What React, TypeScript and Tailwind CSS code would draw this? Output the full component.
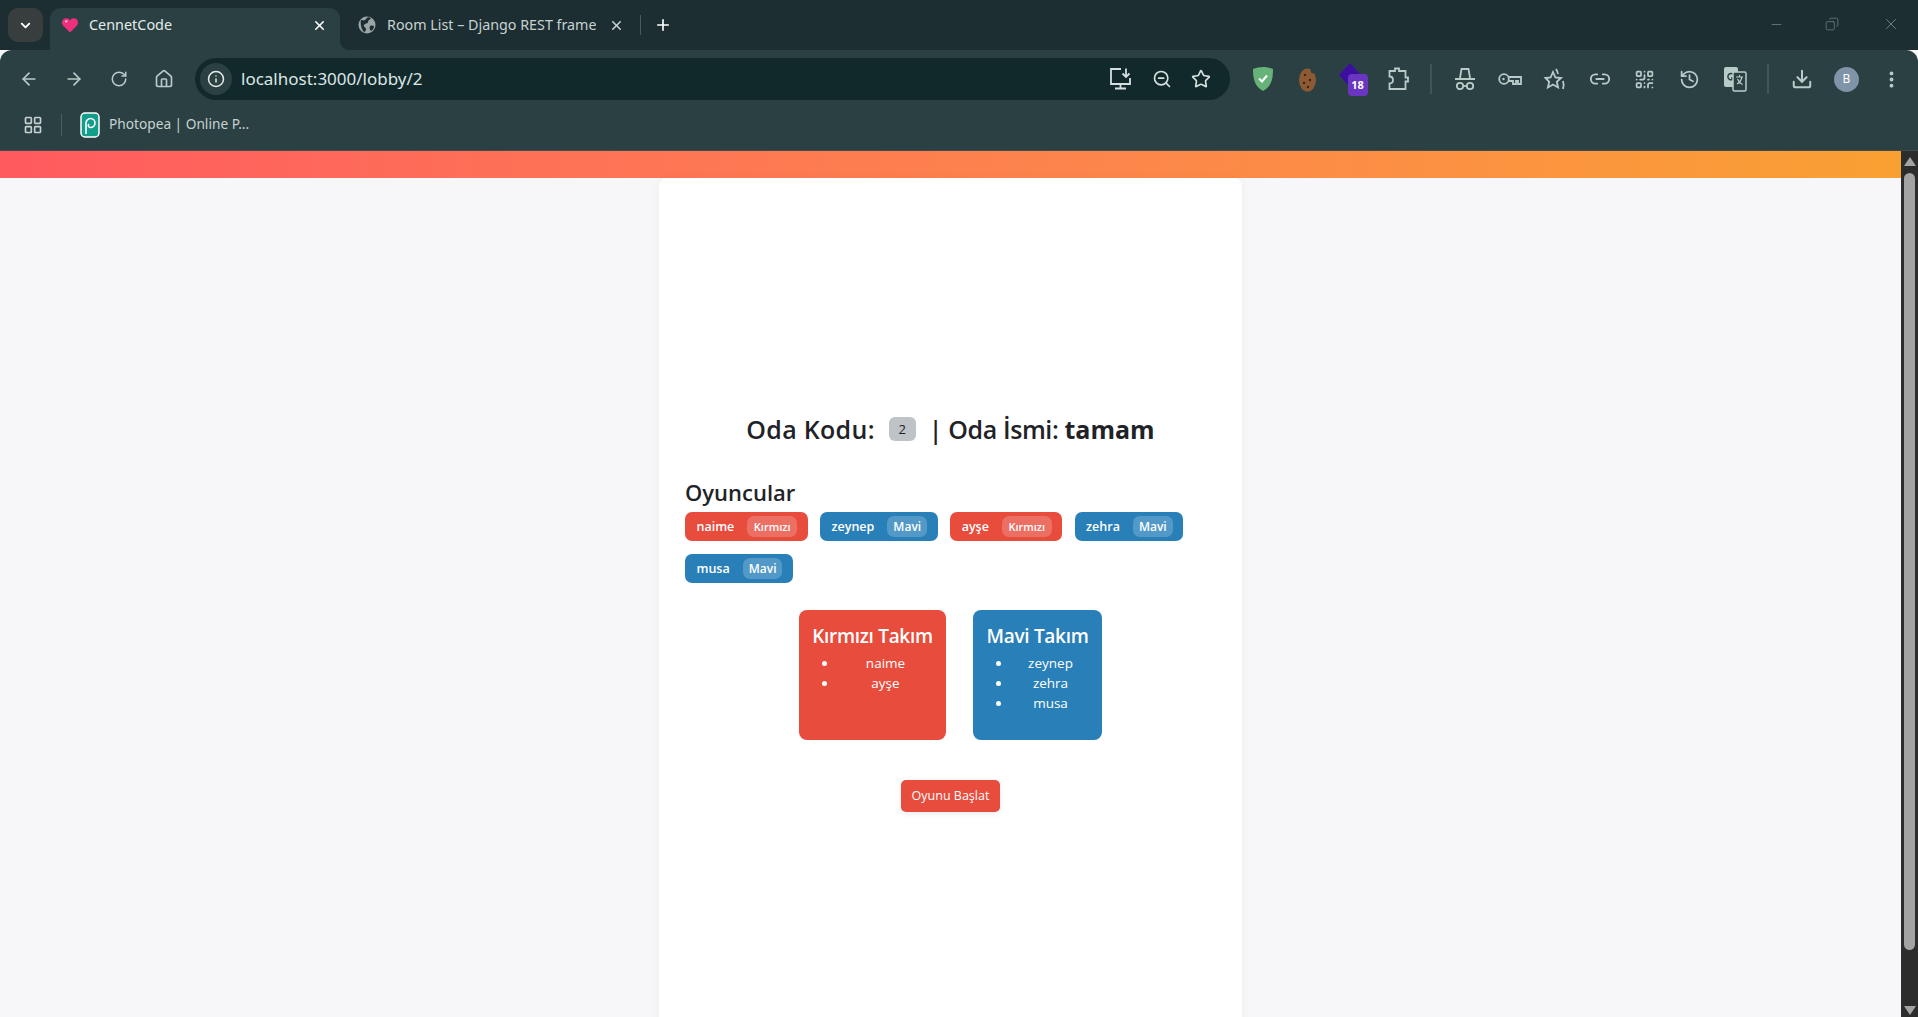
import {
  ArrowLeft,
  ArrowRight,
  ChevronDown,
  Copy,
  Download,
  History,
  House,
  Info,
  LayoutGrid,
  Link2,
  Minus,
  MoreVertical,
  Plus,
  QrCode,
  RotateCw,
  Star,
  X,
  ZoomOut,
} from 'lucide-react';

const uiFont = "font-['Open_Sans','Noto_Sans',sans-serif]";

type Player = { name: string; team: 'red' | 'blue' };

const players: Player[] = [
  { name: 'naime', team: 'red' },
  { name: 'zeynep', team: 'blue' },
  { name: 'ayşe', team: 'red' },
  { name: 'zehra', team: 'blue' },
  { name: 'musa', team: 'blue' },
];

function Heart() {
  return (
    <svg width="18" height="18" viewBox="0 0 18 18">
      <path d="M9 16.500 2 9.500C0 7 1 2.500 5 2.200c1.800-.1 3.200.8 4 2 .8-1.200 2.200-2.100 4-2 4 .3 5 4.800 3 7.300z" fill="#ef2f7c" />
      <path d="M4 5.500c.5-1 1.300-1.400 2.300-1.300v2H4z" fill="#ffd3e4" />
    </svg>
  );
}

function GlobeFilled() {
  return (
    <svg width="18" height="18" viewBox="0 0 18 18" className="shrink-0">
      <circle cx="9" cy="9" r="8.500" fill="#9aa6a6" />
      <path d="M3 4c2 0 3 1 4 0s2-2 3-3l3 1c-1 2-3 2-3 4s-3 1-4 3 2 2 2 4-1 3-2 3C4 14 2 9 3 4zM12 10c2-1 3 0 4 0 0 2-1 4-3 5-1-1-2-3-1-5z" fill="#1d2e33" />
    </svg>
  );
}

function Shield() {
  return (
    <svg width="22" height="26" viewBox="0 0 22 26">
      <path d="M11 1c3.500 0 7 .8 10 2 0 9-1 17-10 22C2 20 1 12 1 3c3-1.200 6.500-2 10-2z" fill="#67b279" />
      <path d="m7 12.500 3 3 5-6" fill="none" stroke="#fff" strokeWidth="2" />
    </svg>
  );
}

function CookieIcon() {
  return (
    <svg width="20" height="26" viewBox="0 0 20 26">
      <ellipse cx="9.500" cy="14" rx="8.500" ry="11.500" fill="#8d5a34" />
      <circle cx="16" cy="4" r="3.500" fill="#2a4043" />
      <circle cx="7" cy="9" r="1.200" fill="#3d2412" />
      <circle cx="12" cy="14" r="1.200" fill="#3d2412" />
      <circle cx="6" cy="17" r="1.200" fill="#3d2412" />
      <circle cx="10" cy="21" r="1.200" fill="#3d2412" />
    </svg>
  );
}

function GemBadge() {
  return (
    <div className="relative h-[34px] w-[30px]">
      <svg className="absolute left-0 top-0" width="24" height="30" viewBox="0 0 24 30">
        <path d="M12 1 23 13 12 25 1 13z" fill="#3d0fa0" />
      </svg>
      <span className="absolute bottom-0 right-0 flex h-[22px] w-[20px] items-center justify-center rounded-[4px] bg-[#6a35c0] text-[11px] font-bold text-white">
        18
      </span>
    </div>
  );
}

function ExtensionIcon() {
  return (
    <svg width="22" height="26" viewBox="0 0 22 26" fill="none" stroke="#b9cbc9" strokeWidth="1.800">
      <path d="M8 5V2.500h4V5h6.500v6.500H21v4h-2.500V23H2.500v-5.500c2.500 0 3.500-1.500 3.500-3.500S5 10.500 2.500 10.500V5z" />
    </svg>
  );
}

function Spy() {
  return (
    <svg width="22" height="24" viewBox="0 0 22 24" fill="none" stroke="#b9cbc9" strokeWidth="1.800">
      <path d="M6 11 7.500 2h7L16 11M1 12h20" />
      <circle cx="6" cy="19" r="3.200" />
      <circle cx="16" cy="19" r="3.200" />
      <path d="M9 19h4" />
    </svg>
  );
}

function KeyIcon() {
  return (
    <svg width="24" height="16" viewBox="0 0 24 16" fill="none" stroke="#b9cbc9" strokeWidth="1.800">
      <circle cx="6" cy="8" r="4.800" />
      <circle cx="5.500" cy="8" r="1.200" fill="#b9cbc9" stroke="none" />
      <path d="M10.500 6H23v7h-3v-3h-2v3h-3v-3h-4.500" />
    </svg>
  );
}

function SparkStar() {
  return (
    <svg width="24" height="24" viewBox="0 0 24 24" fill="none" stroke="#b9cbc9" strokeWidth="1.800">
      <path d="m10 5 2.400 5.500 5.600.5-4.200 3.800 1.300 5.700-5.100-3-5.100 3 1.300-5.700L2.500 11l5.100-.5z" />
      <path d="M13 2c1 1.500 1.500 3 2 5M20 14c1 3 1 5 0 8" />
    </svg>
  );
}

function TranslateIcon() {
  return (
    <svg width="24" height="26" viewBox="0 0 24 26">
      <rect x="1" y="1" width="14" height="20" rx="2" fill="#b9cbc9" />
      <path d="M10.500 8.500A3.200 3.200 0 1 0 11 12H8" fill="none" stroke="#2a4043" strokeWidth="1.500" />
      <rect x="10" y="6" width="13" height="19" rx="1.500" fill="#2a4043" stroke="#b9cbc9" strokeWidth="1.500" />
      <path d="M13 11h7M16.500 9v2M19 11c-1 4-3 6-5 7M14.500 13c1 2.500 3 4.500 5 5.500" fill="none" stroke="#b9cbc9" strokeWidth="1.200" />
    </svg>
  );
}

function InstallIcon() {
  return (
    <svg width="24" height="24" viewBox="0 0 24 24" fill="none" stroke="#d5dfde" strokeWidth="1.800">
      <path d="M13 2H3v15h19v-6M12.500 17v4M7 21.500h11" />
      <path d="M18 1.500V10M14.500 6.500 18 10l3.500-3.500" />
    </svg>
  );
}

function Photopea() {
  return (
    <svg width="20" height="26" viewBox="0 0 20 26">
      <rect x="1" y="1" width="18" height="24" rx="4" fill="#129e8a" stroke="#fff" strokeWidth="1.500" />
      <path d="M6 22V11a4.500 4.500 0 1 1 4.500 4.500A2 2 0 0 1 9 12" fill="none" stroke="#fff" strokeWidth="1.600" />
    </svg>
  );
}

function Slot({ children }: { children: React.ReactNode }) {
  return <div className="flex h-[45px] w-[45px] shrink-0 items-center justify-center text-[#b9cbc9]">{children}</div>;
}

function BrowserChrome() {
  return (
    <header className="shrink-0 font-['Noto_Sans',sans-serif]">
      {/* tab strip */}
      <div className="flex h-[50px] items-end bg-[#1d2e33] pl-2">
        <div className="mb-2 flex h-[34px] w-[35px] items-center justify-center rounded-[10px] bg-[#383d3e] text-white">
          <ChevronDown size={15} strokeWidth={3} />
        </div>
        <div className="relative ml-[7px] flex h-[42px] w-[290px] items-center rounded-t-[11px] bg-[#2a4043] pb-[8px] pl-[11px] text-white">
          <span className="absolute -right-[10px] bottom-0 h-[10px] w-[10px] bg-[radial-gradient(circle_at_100%_0%,transparent_10px,#2a4043_10.500px)]" />
          <Heart />
          <span className="ml-[10px] flex-1 text-[14.400px] text-[#e4ecea]">CennetCode</span>
          <X size={15} strokeWidth={2.500} className="mr-[13px]" />
        </div>
        <div className="flex h-[42px] items-center pb-[8px] text-[#c7d2d0]">
          <span className="ml-[18px]"><GlobeFilled /></span>
          <span className="ml-[11px] w-[209px] shrink-0 overflow-hidden whitespace-nowrap text-[14.300px]">
            Room List – Django REST frame
          </span>
          <X size={15} strokeWidth={2.500} className="ml-[13px] shrink-0" />
          <span className="ml-[16px] h-[20px] w-px shrink-0 bg-[#4b5a5c]" />
          <Plus size={18} strokeWidth={2.200} className="ml-[13px] shrink-0 text-white" />
        </div>
        <div className="ml-auto flex h-[50px] items-center pb-[2px] text-[#8c9a9a]">
          <Minus size={15} strokeWidth={1} className="mr-[41px]" />
          <Copy size={14} strokeWidth={1} className="mr-[43px] -scale-x-100" />
          <X size={18} strokeWidth={1} className="mr-[18px]" />
        </div>
      </div>

      {/* toolbar */}
      <div className="flex h-[58px] items-center rounded-t-[12px] bg-[#2a4043] pl-[6px]">
        <Slot><ArrowLeft size={20} /></Slot>
        <Slot><ArrowRight size={20} /></Slot>
        <Slot><RotateCw size={18} /></Slot>
        <Slot><House size={20} /></Slot>
        <div className="ml-[9px] flex h-[42px] w-[1035px] shrink-0 items-center rounded-full bg-[#12292b] pl-[5px] pr-[7px]">
          <div className="flex h-[32px] w-[32px] items-center justify-center rounded-full bg-[#2a4043] text-[#e4ecea]">
            <Info size={18} />
          </div>
          <span className="ml-[9px] flex-1 text-[17px] text-[#dce6e5]">localhost:3000/lobby/2</span>
          <div className="flex w-[125px] items-center justify-between text-[#d5dfde]">
            <span className="ml-[10px]"><InstallIcon /></span>
            <ZoomOut size={20} className="ml-[1px]" />
            <Star size={20} className="mr-[12px]" />
          </div>
        </div>
        <div className="ml-[10px] flex items-center">
          <Slot><Shield /></Slot>
          <Slot><CookieIcon /></Slot>
          <Slot><GemBadge /></Slot>
          <Slot><ExtensionIcon /></Slot>
          <div className="flex h-[45px] w-[22px] items-center justify-center">
            <span className="h-[30px] w-[2px] bg-[#425659]" />
          </div>
          <Slot><Spy /></Slot>
          <Slot><KeyIcon /></Slot>
          <Slot><SparkStar /></Slot>
          <Slot><Link2 size={22} /></Slot>
          <Slot><QrCode size={21} /></Slot>
          <Slot><History size={21} /></Slot>
          <Slot><TranslateIcon /></Slot>
          <div className="flex h-[45px] w-[22px] items-center justify-center">
            <span className="h-[30px] w-[2px] bg-[#425659]" />
          </div>
          <Slot><Download size={22} strokeWidth={2.200} /></Slot>
          <Slot>
            <span className="flex h-[25px] w-[25px] items-center justify-center rounded-full bg-[#7f94a6] text-[12px] text-white">B</span>
          </Slot>
          <Slot><MoreVertical size={21} strokeWidth={2.500} /></Slot>
        </div>
      </div>

      {/* bookmarks */}
      <div className="flex h-[43px] items-center border-b border-[#3f4d4f] bg-[#2a4043] pb-[9px] text-[#c7d2d0]">
        <LayoutGrid size={20} className="ml-[23px]" />
        <span className="ml-[18px] h-[22px] w-px bg-[#4b5f62]" />
        <span className="ml-[18px] flex items-center"><Photopea /></span>
        <span className="ml-[9px] text-[13.700px]">Photopea | Online P...</span>
      </div>
    </header>
  );
}

function Scrollbar() {
  return (
    <div className="flex w-[17px] shrink-0 flex-col items-center bg-[#2c2c2c] pt-[6px]">
      <div className="h-0 w-0 border-x-[6px] border-b-[9px] border-x-transparent border-b-[#a3a3a3]" />
      <div className="mt-[7px] h-[777px] w-[11px] rounded-full bg-[#a3a3a3]" />
      <div className="mt-[56px] h-0 w-0 border-x-[6px] border-t-[9px] border-x-transparent border-t-[#a3a3a3]" />
    </div>
  );
}

function PlayerChip({ player }: { player: Player }) {
  const red = player.team === 'red';
  return (
    <div
      className={`flex h-[29px] items-center gap-[13px] rounded-[7px] pl-[11.500px] pr-[10.500px] text-[12.500px] font-semibold text-white ${red ? 'bg-[#e74c3c]' : 'bg-[#2980b9]'}`}
    >
      <span className="pt-[2px]">{player.name}</span>
      <span className={`flex h-[21px] items-center rounded-[7px] bg-white/20 pt-[1px] font-semibold ${red ? 'px-[6.500px] text-[11px]' : 'px-[6px] text-[12px]'}`}>
        {red ? 'Kırmızı' : 'Mavi'}
      </span>
    </div>
  );
}

function TeamCard({ title, color, members }: { title: string; color: string; members: string[] }) {
  return (
    <div className={`h-[130px] rounded-[8px] px-[13px] pt-[12px] text-white ${color}`}>
      <h3 className="whitespace-nowrap text-center text-[19px] font-semibold leading-[28px] tracking-[-0.3px]">{title}</h3>
      <ul className="mt-[3px] list-disc pl-[26px] text-center text-[13.500px] leading-[20px]">
        {members.map((m) => (
          <li key={m}>{m}</li>
        ))}
      </ul>
    </div>
  );
}

export default function App() {
  return (
    <div className={`flex h-screen w-screen flex-col overflow-hidden bg-[#f7f7fa] ${uiFont}`}>
      <BrowserChrome />
      <div className="flex min-h-0 flex-1">
        <main className="flex min-w-0 flex-1 flex-col">
          <div className="h-[27px] shrink-0 bg-gradient-to-r from-[#ff5a5f] to-[#f9a032]" />
          <div className="flex flex-1 justify-center">
            <div className="h-[900px] w-[583px] rounded-[8px] bg-white px-[26px] pt-[233px] text-[#1f2328] shadow-[0_2px_10px_rgba(0,0,0,0.05)]">
              <h2 className="flex items-center justify-center whitespace-nowrap text-[25px] font-semibold leading-[36px]">
                <span className="tracking-[0.3px]">Oda Kodu:</span>
                <span className="ml-[14px] mr-[13px] flex h-[24px] w-[27px] items-center justify-center rounded-[6px] bg-[#bdc3c7] pt-[1px] text-[13px] font-normal leading-none">2</span>
                <span className="tracking-[-0.4px]">| Oda İsmi:&nbsp;</span>
                <strong className="font-bold">tamam</strong>
              </h2>
              <h3 className="mt-[30px] text-[22px] font-semibold leading-[30px]">Oyuncular</h3>
              <div className="mt-[5px] flex flex-wrap gap-x-[12.500px] gap-y-[13px]">
                {players.map((p) => (
                  <PlayerChip key={p.name} player={p} />
                ))}
              </div>
              <div className="mt-[27px] flex justify-center gap-[27px]">
                <div className="w-[147px]">
                  <TeamCard title="Kırmızı Takım" color="bg-[#e74c3c]" members={['naime', 'ayşe']} />
                </div>
                <div className="w-[129px]">
                  <TeamCard title="Mavi Takım" color="bg-[#2980b9]" members={['zeynep', 'zehra', 'musa']} />
                </div>
              </div>
              <div className="mt-[40px] flex justify-center">
                <button className="h-[32px] w-[99px] rounded-[5px] bg-[#e74c3c] text-[12.500px] text-white shadow-[0_2px_6px_rgba(0,0,0,0.08)]">
                  Oyunu Başlat
                </button>
              </div>
            </div>
          </div>
        </main>
        <Scrollbar />
      </div>
    </div>
  );
}
